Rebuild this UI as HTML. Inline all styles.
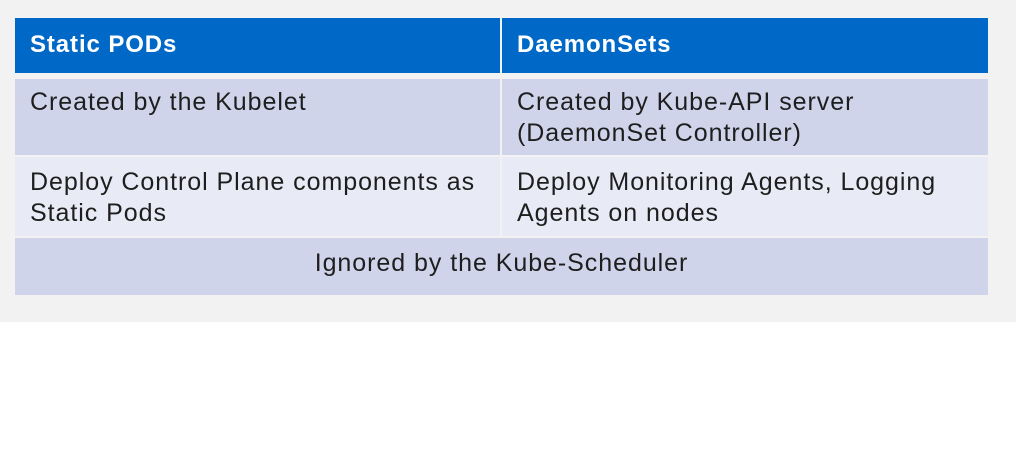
<!DOCTYPE html>
<html><head><meta charset="utf-8"><style>
body{margin:0;width:1016px;height:450px;background:#fff;position:relative;overflow:hidden;font-family:"Liberation Sans",sans-serif;}
.bg{position:absolute;left:0;top:0;width:1016px;height:322px;background:#f2f2f3;}
.c{position:absolute;box-sizing:border-box;padding-left:15px;color:#1e1e1e;font-size:25px;line-height:31px;white-space:nowrap;letter-spacing:0.95px;}
.h{background:#0069c8;color:#fff;font-weight:bold;font-size:24px;padding-top:11px;letter-spacing:0.9px;}
.a{background:#cfd4ea;}
.b{background:#e8eaf5;}
</style></head><body>
<div class="bg"></div>
<div class="c h" style="left:15px;top:18px;width:485px;height:55px">Static PODs</div>
<div class="c h" style="left:502px;top:18px;width:486px;height:55px">DaemonSets</div>
<div class="c a" style="left:15px;top:79px;width:485px;height:76px;padding-top:8px">Created by the Kubelet</div>
<div class="c a" style="left:502px;top:79px;width:486px;height:76px;padding-top:8px">Created by Kube-API server<br>(DaemonSet Controller)</div>
<div class="c b" style="left:15px;top:157px;width:485px;height:79px;padding-top:10px">Deploy Control Plane components as<br>Static Pods</div>
<div class="c b" style="left:502px;top:157px;width:486px;height:79px;padding-top:10px">Deploy Monitoring Agents, Logging<br>Agents on nodes</div>
<div class="c a" style="left:15px;top:238px;width:973px;height:57px;padding:10px 0 0 0;text-align:center">Ignored by the Kube-Scheduler</div>
</body></html>
